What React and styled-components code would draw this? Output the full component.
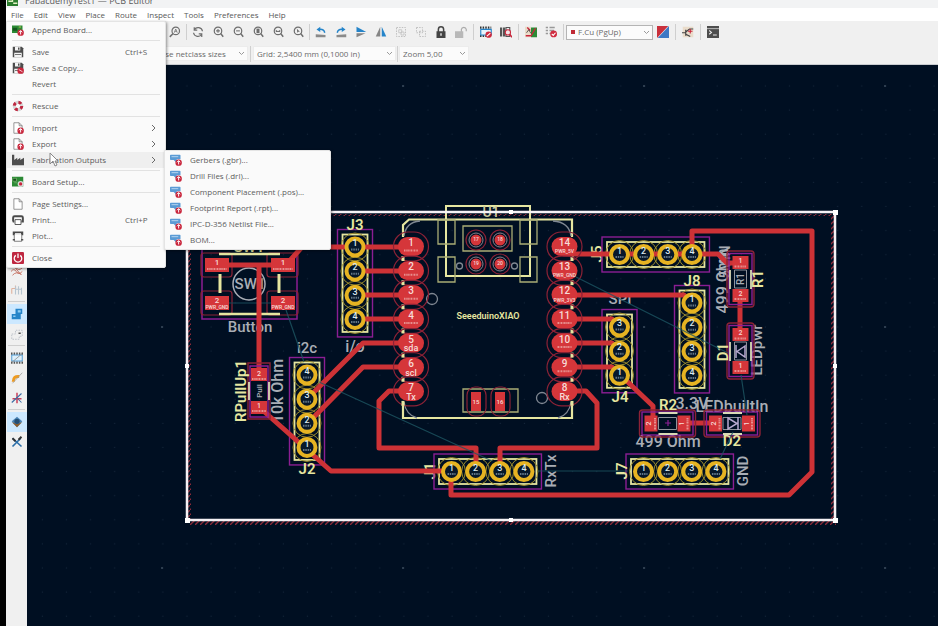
import React from "react";
import styled, { createGlobalStyle } from "styled-components";

const GlobalStyle = createGlobalStyle`
  * { box-sizing: border-box; }
  html, body { margin: 0; background: #000; }
  body, button, select { font-family: "Open Sans", "Noto Sans", sans-serif; font-size: 8px; }
`;

/* ---------- window chrome ---------- */

const Desktop = styled.div`
  min-height: 100vh;
  padding-left: 6px;
  background: #000;
  display: flex;
  overflow: hidden;
`;
const Window = styled.div`
  flex: 1;
  min-width: 0;
  display: flex;
  flex-direction: column;
  background: #f0f0f0;
  color: #5c5c5c;
`;
const TitleBar = styled.header`
  height: 8px;
  display: flex;
  align-items: flex-end;
  gap: 7px;
  padding: 0 1px 2px;
  overflow: hidden;
  background: #f2f3f4;
  line-height: 10px;
  font-size: 9px;
  svg { flex: none; }
`;
const MenuBar = styled.nav`
  position: relative;
  height: 13px;
  display: flex;
  background: #fff;
`;
const MenuTitle = styled.button`
  border: 0;
  padding: 0 5px;
  background: transparent;
  color: #585858;
  line-height: 12px;
`;
const ToolRow = styled.div`
  display: flex;
  align-items: center;
  height: 22px;
  padding-left: ${(p) => p.$indent}px;
  background: #f0f0f0;
  border-bottom: ${(p) => (p.$last ? "1px solid #c9ccd0" : "0")};
`;
const ToolButton = styled.button`
  width: 20px;
  height: 20px;
  flex: none;
  padding: 0;
  border: 0;
  display: grid;
  place-items: center;
  background: ${(p) => (p.$active ? "#cce8ff" : "transparent")};
  opacity: ${(p) => (p.$dim ? 0.4 : 1)};
`;
const Divider = styled.span`
  flex: none;
  width: 1px;
  height: 16px;
  margin: 0 ${(p) => p.$gap ?? 2}px;
  background: #cfcfcf;
`;
const SelectBox = styled.label`
  display: grid;
  align-items: center;
  flex: none;
  width: ${(p) => p.$width}px;
  height: 15px;
  background: #fbfbfb;
  border: 1px solid ${(p) => (p.$outlined ? "#b4b4b4" : "#ececec")};
  > * { grid-area: 1 / 1; }
  > svg { justify-self: end; margin-right: 2px; pointer-events: none; }
`;
const Select = styled.select`
  appearance: none;
  width: 100%;
  border: 0;
  padding: 0 8px 0 ${(p) => p.$inset ?? 3}px;
  background: transparent;
  color: #6a6a6a;
  line-height: 12px;
`;
const Swatch = styled.span`
  width: 4px;
  height: 4px;
  margin-left: 4px;
  background: #c02a35;
`;
const Workspace = styled.div`
  flex: 1;
  display: flex;
  min-height: 0;
`;
const SideBar = styled.aside`
  width: 21px;
  flex: none;
  display: flex;
  flex-direction: column;
  align-items: center;
  padding-top: 195px;
  background: #f0f0f0;
`;
const SideRule = styled.span`
  width: 17px;
  height: 1px;
  margin: 1px 0 2px;
  background: #cfcfcf;
`;
const Canvas = styled.main`
  flex: 1;
  min-width: 0;
  display: flex;
  background: #000f22;
  svg { display: block; width: 100%; height: 100%; }
`;

/* ---------- menus ---------- */

const Popup = styled.div`
  position: absolute;
  z-index: 2;
  left: ${(p) => p.$left}px;
  top: ${(p) => p.$top}px;
  width: ${(p) => p.$width}px;
  padding: ${(p) => p.$pad};
  background: #fafafa;
  border: 1px solid #e4e4e4;
  border-radius: 0 2px 2px 2px;
  box-shadow: 1px 1px 3px rgba(0, 0, 0, 0.4);
`;
const Item = styled.button`
  display: grid;
  grid-template-columns: 13px 1fr 31px;
  align-items: center;
  column-gap: 7px;
  width: 100%;
  height: 16px;
  padding: 0 9px 0 5px;
  border: 0;
  text-align: left;
  background: ${(p) => (p.$open ? "#efefef" : "transparent")};
  color: #5c5c5c;
  line-height: 12px;
  white-space: nowrap;
`;
const SubItem = styled(Item)`
  grid-template-columns: 12px 1fr;
  column-gap: 8px;
`;
const Trailing = styled.span`
  display: flex;
  justify-content: ${(p) => (p.$end ? "flex-end" : "flex-start")};
`;
const Rule = styled.hr`
  height: 1px;
  margin: 2px 5px 3px;
  border: 0;
  background: #e2e2e2;
`;
const Pointer = styled.svg`
  position: absolute;
  z-index: 3;
  left: 43px;
  top: 144px;
  width: 10px;
  height: 15px;
`;

/* ---------- icons (16 x 16 grid) ---------- */

const K = "#6e6e6e";
const lens = (
  <g fill="none" stroke={K} strokeWidth="1.6">
    <circle cx="8" cy="6.5" r="5" />
    <path d="M11.5 10l3.500 4.300" strokeWidth="2" />
  </g>
);
const badge = (
  <g>
    <circle cx="11.5" cy="11.5" r="4.3" fill="#c9263c" />
    <path d="M11.5 9v5M9.3 11l2.2-2.2L13.7 11" stroke="#fff" fill="none" strokeWidth="1.3" />
  </g>
);
const noSign = (
  <g>
    <circle cx="11.5" cy="11.5" r="4.2" fill="#d02a3e" />
    <path d="m9.2 13.5 4.6-4" stroke="#fff" strokeWidth="1.5" />
  </g>
);
const page = <path d="M2.5 1h7l4 4v10h-11zM9.5 1v4h4" fill="#fff" stroke="#777" />;
const floppy = (
  <g>
    <path d="M1 1h12l2 2v12H1z" fill="#4c4c4c" />
    <path d="M4 1h7v5H4zM3 9h10v6H3z" fill="#f4f4f4" />
    <path d="M8 2h2v3H8zM4 11h8v1H4z" fill="#4c4c4c" />
  </g>
);
const ICONS = {
  app: <><path d="M0 0h16v16H0z" fill="#2b7d2d" /><path d="M2 9h6V4M9 12h6" stroke="#e3f0c3" fill="none" strokeWidth="2" /></>,
  append: <><path d="M0 2h14v10H0z" fill="#2c8a35" /><path d="M1 5h6v4H1z" fill="#15551d" /><path d="M9 4h3" stroke="#e8e05a" />{badge}</>,
  save: floppy,
  saveCopy: <>{floppy}<circle cx="11.5" cy="11.5" r="4.3" fill="#c9263c" /><path d="m9 10 5 3" stroke="#fff" /></>,
  rescue: <><circle cx="8" cy="8" r="5" fill="none" stroke="#d6d6d6" strokeWidth="4" /><circle cx="8" cy="8" r="5" fill="none" stroke="#bf2740" strokeWidth="4" strokeDasharray="4 3.85" /></>,
  import: <>{page}{badge}</>,
  page,
  fab: <path d="M0 1h3v7l4-3v3l4-3v3l5-3v10H0z" fill="#4d4d4d" />,
  setup: <><path d="M0 1h15v13H0z" fill="#2c8a35" /><path d="M1 3h5v4H1zM3 9h4" fill="#174f1d" stroke="#77b66e" /><circle cx="11.5" cy="10.5" r="4" fill="#d9d9d9" /><circle cx="11.5" cy="10.5" r="2.2" fill="#c9263c" /></>,
  print: <g fill="none" stroke="#4a4a4a"><path d="M1.500 10V5q0-2 2-2h9q2 0 2 2v5h-2M1 10h2" strokeWidth="2.600" /><path d="M4 7.500h8v6.500H4z" fill="#fff" strokeWidth="1.200" /></g>,
  plot: <><path d="M1 2h14v5H1z" fill="#4a4a4a" /><path d="M4 4h8v3H4z" fill="#ddd" /><path d="M3 6v9h10V6" fill="#fff" stroke="#555" /><path d="M1 13h3M12 13h3" stroke="#555" strokeWidth="2" /></>,
  close: <><rect width="16" height="16" rx="1.5" fill="#bf2740" /><path d="M5 4.5a5 5 0 1 0 6 0M8 2v6" fill="none" stroke="#fff" strokeWidth="1.7" /></>,
  gerber: <><path d="M0 2q0-1 1-1h12q1 0 1 1v5H9v5L5 8H1q-1 0-1-1z" fill="#5b9bd5" /><path d="M2 3.500h9" stroke="#a9cdec" strokeWidth="1.5" />{badge}</>,
  find: <g fill="none" stroke={K} strokeWidth="1.6"><circle cx="9" cy="6.5" r="5" /><path d="M5.500 10 1 14.500" strokeWidth="2" /><path d="m7 9 2-5 2 5M7.5 7h3" strokeWidth="1" /></g>,
  refresh: <path d="M14 7A6 6 0 0 0 3 5M2 9a6 6 0 0 0 11 2M3 1.5V5.5h4M13 14.5v-4H9" fill="none" stroke={K} strokeWidth="1.6" />,
  zoomIn: <>{lens}<path d="M5.500 6.500h5M8 4v5" stroke={K} strokeWidth="1.400" /></>,
  zoomOut: <>{lens}<path d="M5.500 6.500h5" stroke={K} strokeWidth="1.400" /></>,
  zoomPage: <>{lens}<path d="M6 3.500h4v6H6z" fill={K} /></>,
  zoomObj: <>{lens}<path d="M5 8V5l3 2 3-2v3z" fill={K} /></>,
  zoomSel: <>{lens}<path d="m6.500 3.500 4 4-2 .3L7 9z" fill={K} /></>,
  ccw: <><path d="M1 15v-4l13 1v3z" fill="#8a8a8a" /><path d="M13 9Q12 4 6 4.5" fill="none" stroke="#2584c9" strokeWidth="2" /><path d="M7 1v7L2 4.5z" fill="#2584c9" /></>,
  cw: <><path d="M2 15v-3l13-1v4z" fill="#8a8a8a" /><path d="M3 9Q4 4 10 4.5" fill="none" stroke="#2584c9" strokeWidth="2" /><path d="M9 1v7l5-3.5z" fill="#2584c9" /></>,
  flipV: <><path d="M2 1v7h13z" fill="#2584c9" /><path d="M2 15V9.5h12z" fill="#858585" /></>,
  flipH: <><path d="M9 1v13h6z" fill="#2584c9" /><path d="M7 1v13H1z" fill="#858585" /></>,
  group: <><path d="M2 2h12v12H2z" fill="none" stroke="#555" strokeDasharray="2 1.5" /><path d="M5 5h4v4H5zM8 8h4v4H8z" fill="none" stroke="#777" /></>,
  ungroup: <path d="M2 2h8v7H2zM6 7h8v7H6z" fill="none" stroke="#555" strokeDasharray="2 1.5" />,
  lock: <><path d="M4.5 8V4.5a3.5 3.5 0 0 1 7 0V8" fill="none" stroke="#444" strokeWidth="2" /><path d="M2 7h12v9H2z" fill="#444" /><path d="M8 9.5v3.5" stroke="#ddd" strokeWidth="2" /></>,
  unlock: <><path d="M8.5 8V4.5a3.3 3.3 0 0 1 6.5 0V7" fill="none" stroke="#444" strokeWidth="1.5" /><path d="M0 7h11v9H0z" fill="#666" /></>,
  footEd: <><path d="M0 2h15M0 13h9" stroke="#333" strokeWidth="3" strokeDasharray="2 1.5" /><path d="M1 4.5h14V12H1z" fill="#e8f3fb" stroke="#2584c9" strokeWidth="1.5" />{noSign}</>,
  library: <><path d="M0 2h3v12H0zM4 2h3v12H4z" fill="#555" /><path d="M8 2h5v12H8z" fill="none" stroke="#555" strokeWidth="1.5" /><circle cx="10.5" cy="8.5" r="3.5" fill="#f4e6e8" stroke="#c9263c" strokeWidth="1.4" /><path d="m13 11 3 4" stroke="#c9263c" strokeWidth="2" /></>,
  update: <><path d="M0 1h8v14H0z" fill="#eadbc9" /><path d="M8 2h8v13H8z" fill="#2c8a35" /><path d="M1 13h7L14 3M3 2l4 4" stroke="#c9263c" strokeWidth="1.8" fill="none" /><path d="m2 9 3-4 3 5" stroke="#333" fill="none" /></>,
  drc: <><path d="M1 2h3M1 6h3M1 10h3M6 2h7M6 6h6M6 10h2" stroke="#999" strokeWidth="1.8" /><circle cx="11.5" cy="10.5" r="4.5" fill="#d02a3e" /><path d="m9 10.5 2 2 3-3.5" fill="none" stroke="#fff" strokeWidth="1.5" /></>,
  layers: <><path d="M0 0h15L0 16z" fill="#c9303c" /><path d="M16 0v16H1z" fill="#3d78c4" /></>,
  schematic: <><path d="M1 1h14v14H1z" fill="#eadccb" /><path d="M0 9h5M5 5v8M5 8l5-4h5M5 11l6 3" stroke="#444" fill="none" strokeWidth="1.6" /><path d="M8 7h6M11 4v6" stroke="#c9263c" strokeWidth="1.5" /></>,
  console: <><path d="M0 0h16v16H0z" fill="#4d4d4d" /><path d="M0 3.5h16" stroke="#ddd" /><path d="m3 6 3 2.5L3 11M8 12h5" stroke="#eee" fill="none" strokeWidth="1.4" /></>,
  ratsnest: <path d="M0 5q4-5 7 0t8 0M0 10q4-5 7 0t8 0M2 15q5-6 12-1M3 2l10 12" fill="none" stroke="#c46b5b" strokeWidth="1.2" />,
  netcolor: <><path d="M1 6h5V2M1 6v7" fill="none" stroke="#e0b39f" strokeWidth="1.5" /><path d="M6 3v11M10 3v11M6 7h8M14 5v9" fill="none" stroke="#b7c5d0" strokeWidth="1.5" /></>,
  zoneFill: <><path d="M1 8h5V1h9v7h-2v7H1z" fill="#2584c9" /><path d="M9 3h4v3H9zM3 10h3v2H3z" fill="#8ecbf2" /></>,
  zoneLine: <><path d="M1 8h5V3h9v8h-4v4H1z" fill="none" stroke="#aeb4bd" strokeDasharray="2 1.5" /><path d="M10 6h3v2h-3z" fill="#555" /></>,
  padSketch: <><path d="M0 2h16M0 14h16" stroke="#555" strokeWidth="3" strokeDasharray="2 1.5" /><path d="M1 4h14v8H1z" fill="#dff0fb" stroke="#2584c9" /><path d="M1 14 15 2" stroke="#888" /></>,
  viaSketch: <><path d="M3 13Q3 5 11 6" fill="none" stroke="#ef9b20" strokeWidth="4" /><path d="m2 15 13-14" stroke="#999" /></>,
  trackSketch: <><path d="M8 1v14M2 9h12" stroke="#c9405a" strokeWidth="2" /><path d="m1 14 13-12M9 9l5 5" stroke="#3b6ea5" strokeWidth="1.4" /></>,
  contrast: <><path d="M1 7 8 1l7 6-7 8z" fill="#4d86b8" /><path d="m1 8 7 7 7-7-7 3z" fill="#8b5c2c" /><circle cx="8" cy="7" r="3.5" fill="#244e74" /></>,
  tools: <><path d="m2 3 12 11M2 14 13 3" stroke="#2b6ea8" strokeWidth="2.2" /><path d="m10 5 4-4M2 3l4 4" stroke="#333" strokeWidth="2.5" /></>,
};
const Icon = ({ name, size = 12 }) => (
  <svg width={size} height={size} viewBox="0 0 16 16" aria-hidden="true">{ICONS[name]}</svg>
);
const Chevron = () => (
  <svg width="7" height="7" viewBox="0 0 7 7" aria-hidden="true"><path d="m1 2 2.500 2.500L6 2" fill="none" stroke="#9a9a9a" /></svg>
);
const Arrow = () => (
  <svg width="6" height="8" viewBox="0 0 6 8" aria-hidden="true"><path d="m2 1 3 3-3 3" fill="none" stroke="#6a6a6a" /></svg>
);

/* ---------- data ---------- */

const MENUS = ["File", "Edit", "View", "Place", "Route", "Inspect", "Tools", "Preferences", "Help"];
const FILE_MENU = [
  ["append", "Append Board..."], null,
  ["save", "Save", "Ctrl+S"], ["saveCopy", "Save a Copy..."], [null, "Revert"], null,
  ["rescue", "Rescue"], null,
  ["import", "Import", ">"], ["import", "Export", ">"], ["fab", "Fabrication Outputs", ">"], null,
  ["setup", "Board Setup..."], null,
  ["page", "Page Settings..."], ["print", "Print...", "Ctrl+P"], ["plot", "Plot..."], null,
  ["close", "Close"],
];
const FAB_MENU = ["Gerbers (.gbr)...", "Drill Files (.drl)...", "Component Placement (.pos)...", "Footprint Report (.rpt)...", "IPC-D-356 Netlist File...", "BOM..."];
/* a number stands for a divider with that margin */
const TOOLS = ["find", 1, "refresh", "zoomIn", "zoomOut", "zoomPage", "zoomObj", "zoomSel", 1, "ccw", "cw", "flipV", "flipH", "group", "ungroup", "lock", "unlock", 2, "footEd", "library", 2, "update", "drc", 2];
const SIDE = ["ratsnest", "netcolor", null, "zoneFill", "zoneLine", null, "padSketch", "viaSketch", "trackSketch", null, "contrast", "tools"];
const DIM = ["group", "ungroup", "unlock"];

/* ---------- board drawing ---------- */

const SILK = "#e6e6a0";
const COPPER = "#cd3236";
const PAD = "#d5363a";
const PAD_TEXT = "#f7dcd8";
const COURT = "#8b1e93";
const FAB = "#a9adb5";
const MASK = "#8c2236";
const PITCH = 24.15;

const BoardText = styled.text`
  font-family: Roboto, sans-serif;
  font-size: ${(p) => p.$size}px;
  font-weight: ${(p) => (p.$bold ? 600 : 500)};
  fill: ${(p) => p.$color};
  text-anchor: middle;
`;
const Label = ({ x, y, children, vertical, size = 15, color = FAB, bold }) => (
  <BoardText dy="0.36em" $size={size} $color={color} $bold={bold} transform={`translate(${x} ${y})${vertical ? " rotate(-90)" : ""}`}>
    {children}
  </BoardText>
);
const NetMark = ({ x, y, w = 14 }) => (
  <path d={`M${x - w / 2} ${y}h${w}`} stroke="#f0b7b4" strokeWidth="2" strokeDasharray="1.5 .6 .7 .5" opacity=".7" />
);

const HEADERS = [
  { ref: "J3", x: 355, y: 247, pins: [1, 2, 3, 4] },
  { ref: "J2", x: 307, y: 375, pins: [4, 3, 2, 1] },
  { ref: "J1", x: 451.5, y: 471.5, pins: [1, 2, 3, 4], row: true },
  { ref: "J5", x: 619.5, y: 254.5, pins: [1, 2, 3, 4], row: true },
  { ref: "J8", x: 692, y: 303, pins: [1, 2, 3, 4] },
  { ref: "J4", x: 619.5, y: 327, pins: [3, 2, 1] },
  { ref: "J7", x: 643.5, y: 471.5, pins: [1, 2, 3, 4], row: true },
];
const pinAt = (h, i) => [h.x + (h.row ? i * PITCH : 0), h.y + (h.row ? 0 : i * PITCH)];

const HeaderOutline = ({ header }) => {
  const len = (header.pins.length - 1) * PITCH;
  const w = header.row ? len : 0;
  const h = header.row ? 0 : len;
  const { x, y } = header;
  return (
    <g fill="none">
      <rect x={x - 17.5} y={y - 17.5} width={w + 35} height={h + 35} stroke={COURT} strokeWidth="1.4" />
      <rect x={x - 12.5} y={y - 12.5} width={w + 25} height={h + 25} stroke={SILK} strokeWidth="1.8" />
      {header.pins.map((pin, i) => {
        const [cx, cy] = pinAt(header, i);
        return <circle key={pin} cx={cx} cy={cy} r="14" stroke="#9c8c2c" />;
      })}
    </g>
  );
};
const HeaderPins = ({ header }) => header.pins.map((pin, i) => {
  const [cx, cy] = pinAt(header, i);
  return (
    <g key={pin}>
      <circle cx={cx} cy={cy} r="8.5" stroke="#e6b322" strokeWidth="4" fill="#07182b" />
      <path d={`M${cx - 4} ${cy + 2.5}h8`} stroke="#9fb5c4" strokeWidth="2" strokeDasharray="1.5 .8" opacity=".6" />
      <Label x={cx} y={cy - 4} size={9} color="#dbe8ee">{pin}</Label>
    </g>
  );
});

const LEFT_PINS = [["1"], ["2"], ["3"], ["4"], ["5", "sda"], ["6", "scl"], ["7", "Tx"]];
const RIGHT_PINS = [["14", "PWR_5V"], ["13", "PWR_GND"], ["12", "PWR_3V3"], ["11"], ["10"], ["9"], ["8", "Rx"]];

const ModulePads = ({ x, pins, side }) => pins.map(([pin, net], i) => {
  const y = 246.5 + i * PITCH;
  return (
    <g key={pin}>
      <rect x={x - 17.5} y={y - 14.5} width="35" height="29" rx="14.5" fill="none" stroke={MASK} strokeWidth="1.2" />
      <path d={`M${side} ${y + 9.5}v5`} stroke={SILK} strokeWidth="3" />
      <rect x={x - 13} y={y - 9.5} width="26" height="19" rx="9.5" fill={PAD} />
      <Label x={x} y={y - 4} size={10} color={PAD_TEXT}>{pin}</Label>
      {net ? <Label x={x} y={y + 5} size={net.length > 3 ? 5 : 9} color={PAD_TEXT}>{net}</Label> : <NetMark x={x} y={y + 4} />}
    </g>
  );
});

const Chip = ({ x, y, horizontal, top = 2, bottom = 1 }) => (
  <g transform={`translate(${x} ${y})${horizontal ? " rotate(-90)" : ""}`} fill="none">
    <rect x="-13.5" y="-28" width="27" height="56" rx="3" stroke={MASK} strokeWidth="1.4" />
    <rect x="-11.5" y="-25.5" width="23" height="51" stroke={COURT} strokeWidth="1.4" />
    <path d="M-10.500-9v19M10.500-9v19" stroke="#d9d9b5" strokeWidth="1.8" />
    <path d="M-6-9h12v18H-6z" stroke="#8f939b" />
    <rect x="-8" y="-23" width="16" height="13" fill={PAD} />
    <rect x="-8" y="10" width="16" height="13" fill={PAD} />
    <NetMark x={0} y={-12.5} w={12} />
    <NetMark x={0} y={20} w={12} />
    <Label x={0} y={-19} size={7} color={PAD_TEXT}>{top}</Label>
    <Label x={0} y={14} size={7} color={PAD_TEXT}>{bottom}</Label>
  </g>
);

const TRACKS = [
  "M355 247H302L286 265H217M259 265V375", "M355 247H411", "M355 271H411", "M355 295H411", "M355 319H411",
  "M259 407 331 471H451", "M307 399 363 343H411", "M307 424 363 367H411",
  "M411 391H389L379 401V448H476V471", "M564 391H586L597 403V448H500V471",
  "M451 471V495H789L812 472V231H692V254", "M564 254H718L727 263H740",
  "M564 295H684L692 303", "M564 319H612L620 327", "M564 343H612L620 351", "M564 367H612L653 406V421",
  "M684 423H717", "M740 295V335",
];

const Board = () => (
  <svg viewBox="27 65 911 561" preserveAspectRatio="xMinYMin slice" role="img" aria-label="Printed circuit board layout">
    <defs>
      <pattern id="minor" x="175" y="74" width="24.1" height="24.1" patternUnits="userSpaceOnUse"><circle cx="12" cy="12" r=".6" fill="#14253a" /></pattern>
      <pattern id="major" x="42" y="-34" width="241" height="241" patternUnits="userSpaceOnUse"><circle cx="120" cy="120" r="1" fill="#3a4a5c" /></pattern>
      <pattern id="hatch" width="5" height="5" patternUnits="userSpaceOnUse"><path d="M0 5 5 0" stroke="#8e2a38" strokeWidth="1.3" /></pattern>
    </defs>
    <rect x="27" y="65" width="2000" height="2000" fill="url(#minor)" />
    <rect x="27" y="65" width="2000" height="2000" fill="url(#major)" />
    <path d="M189 214H834V216H189zM189 521H836V525H189zM188 214H191V520H188zM831 214H834V520H831z" fill="url(#hatch)" />

    {/* switch outlines */}
    <g fill="none">
      <rect x="202" y="244" width="95" height="75" stroke={COURT} strokeWidth="1.5" />
      {[[217, 265], [283, 265], [217, 303], [283, 303]].map(([x, y]) => (
        <rect key={`${x}-${y}`} x={x - 16} y={y - 12} width="31" height="24" rx="3" stroke={MASK} strokeWidth="1.2" />
      ))}
      <path d="M219 254H280M219 314H280" stroke={SILK} strokeWidth="2.5" />
      <path d="M220 274V293M279 274V293" stroke={SILK} strokeWidth="3" />
      <circle cx="249" cy="284" r="16" stroke={FAB} strokeWidth="1.5" />
      <path d="M217 303H283" stroke="#164856" />
    </g>
    <Label x={249} y={247} size={15} color={SILK} bold>SW1</Label>
    <Label x={250} y={284}>SW1</Label>
    <Label x={250} y={327}>Button</Label>

    {/* fabrication text */}
    <Label x={307} y={348}>i2c</Label>
    <Label x={355} y={346} size={16}>i/o</Label>
    <Label x={277} y={391} size={16} vertical>10k Ohm</Label>
    <Label x={551} y={471} vertical>RxTx</Label>
    <Label x={620} y={299}>SPI</Label>
    <Label x={722} y={281} size={16} vertical>499 Ohm</Label>
    <Label x={725} y={262} vertical>5VIN</Label>
    <Label x={692} y={403} size={16}>3.3V</Label>
    <Label x={732} y={406} size={16}>LEDbuiltIn</Label>
    <Label x={668} y={441} size={16}>499 Ohm</Label>
    <Label x={757} y={350} vertical>LEDpwr</Label>
    <Label x={743} y={471} vertical>GND</Label>

    <Label x={430} y={471} color={SILK} bold vertical>J1</Label>
    <Label x={597} y={254} color={SILK} bold vertical>J5</Label>

    {HEADERS.map((h) => <HeaderOutline key={h.ref} header={h} />)}
    <g fill="none" stroke={COPPER} strokeWidth="5" strokeLinecap="round" strokeLinejoin="round">
      {TRACKS.map((d) => <path key={d} d={d} />)}
    </g>
    {HEADERS.map((h) => <HeaderPins key={h.ref} header={h} />)}

    {/* switch pads */}
    {[[217, 265, 1], [283, 265, 1], [217, 303, 2], [283, 303, 2]].map(([x, y, n]) => (
      <g key={`${x}.${y}`}>
        <rect x={x - 12} y={y - 7} width="24" height="14" fill={PAD} />
        <Label x={x} y={y - 3} size={8} color={PAD_TEXT}>{n}</Label>
        {n === 2 ? <Label x={x} y={y + 4} size={5} color={PAD_TEXT}>PWR_GND</Label> : <NetMark x={x} y={y + 4} w={20} />}
      </g>
    ))}

    {/* microcontroller module */}
    <g fill="none" stroke={SILK}>
      <path d="M403 237V225L409 219.500H572V237M403 404V418H572V404" strokeWidth="2.2" />
      <path d="M446 206H530V276H446z" strokeWidth="2" />
      <path d="M463 226H512V251H463zM438 220H455V244H438zM438 257H455V282H438zM520 220H537V244H520zM520 257H537V282H520zM463 389H518V412H463z" strokeWidth="1.3" stroke="#a9ad76" />
    </g>
    <g fill="none" stroke="#7f8792" strokeWidth="1.3">
      <path d="M404 236Q406 222 420 221M571 236Q569 222 553 221M404 402Q406 415 417 418M571 402Q569 415 558 418" />
      <circle cx="432" cy="299" r="5.5" /><circle cx="542" cy="398" r="5.5" />
      <circle cx="459.5" cy="266" r="3" /><circle cx="514.5" cy="266" r="3" />
    </g>
    {[[476, 240, 17], [500, 240, 18], [476, 264, 19], [500, 264, 20]].map(([x, y, n]) => (
      <g key={n} fill="none">
        <circle cx={x} cy={y} r="10" stroke={MASK} strokeWidth="1.2" />
        <circle cx={x} cy={y} r="7" stroke="#85848e" />
        <circle cx={x} cy={y} r="5.5" fill={PAD} />
        <Label x={x} y={y - 1} size={5} color={PAD_TEXT}>{n}</Label>
      </g>
    ))}
    {[[476, 15], [500, 16]].map(([x, n]) => (
      <g key={n}>
        <rect x={x - 9} y="387" width="19" height="29" rx="8" fill="none" stroke={MASK} strokeWidth="1.2" />
        <rect x={x - 5} y="392" width="10" height="19" fill={PAD} />
        <Label x={x} y={402} size={6} color={PAD_TEXT}>{n}</Label>
      </g>
    ))}
    <ModulePads x={411} pins={LEFT_PINS} side={403} />
    <ModulePads x={564.5} pins={RIGHT_PINS} side={572} />
    <Label x={491} y={212} size={14} color="#c8caa0">U1</Label>
    <Label x={488} y={316} size={9} color={SILK} bold>SeeeduinoXIAO</Label>

    {/* resistors and diodes */}
    <Chip x={740.5} y={279} top={1} bottom={2} />
    <Chip x={740.5} y={351} />
    <Chip x={667.5} y={423.5} horizontal />
    <Chip x={732} y={423.5} horizontal />
    <path d="M728 418 737 423.500 728 429zM738 417V430M745 346 737 351.500 745 357zM736 345V358" fill="none" stroke="#b7a9cf" strokeWidth="1.5" />
    <path d="M668 420V426M665 423H671" stroke={COURT} strokeWidth="1.2" />
    <Label x={740.5} y={279} size={10} vertical>R1</Label>
    <g transform="translate(259 391)">
      <path d="M-11-28H11V28H-11z" fill="none" stroke={MASK} strokeWidth="1.4" />
      <path d="M-9-25H9V26H-9z" fill="none" stroke={COURT} strokeWidth="1.4" />
      <path d="M-10-9V9M10-9V9" stroke="#d9d9b5" strokeWidth="1.8" />
      <path d="M-8-23H8V-10H-8zM-8 10H8V23H-8z" fill={PAD} />
      <NetMark x={0} y={-12} w={14} />
      <NetMark x={0} y={20} w={14} />
    </g>
    <Label x={259} y={373} size={7} color={PAD_TEXT}>2</Label>
    <Label x={259} y={405} size={7} color={PAD_TEXT}>1</Label>
    <Label x={259} y={391} size={8} vertical>Pull</Label>

    {/* silkscreen references */}
    <Label x={355} y={225} color={SILK} bold>J3</Label>
    <Label x={307} y={469} color={SILK} bold>J2</Label>
    <Label x={692} y={281} color={SILK} bold>J8</Label>
    <Label x={620} y={397} color={SILK} bold>J4</Label>
    <Label x={622} y={471} color={SILK} bold vertical>J7</Label>
    <Label x={241} y={391} color={SILK} bold vertical>RPullUp1</Label>
    <Label x={758} y={279} color={SILK} bold vertical>R1</Label>
    <Label x={723} y={352} color={SILK} bold vertical>D1</Label>
    <Label x={668} y={405} color={SILK} bold>R2</Label>
    <Label x={732} y={441} color={SILK} bold>D2</Label>

    <path d="M286 310 304 362M319 382 492 461M576 277 728 353M538 471H628M741 375 747 415M733 432 720 459" fill="none" stroke="#1d5663" strokeWidth="1.2" opacity=".8" />

    {/* board edge with its drag handles */}
    <rect x="187" y="212" width="648" height="308" fill="none" stroke="#f5f2f5" strokeWidth="2.5" />
    <path d="M185 210h4v4h-4zM833 210h5v5h-5zM185 518h5v5h-5zM833 518h5v5h-5zM509 210h4v4h-4zM509 518h4v4h-4zM185 364h4v4h-4zM833 364h4v4h-4z" fill="#fff" />
  </svg>
);

/* ---------- application ---------- */

const FileMenu = () => (
  <Popup $left={0} $top={13} $width={160} $pad="0 0 1px" role="menu" aria-label="File">
    {FILE_MENU.map((entry, i) => {
      if (!entry) return <Rule key={i} />;
      const [icon, text, extra] = entry;
      const nested = extra === ">";
      return (
        <Item key={text} role="menuitem" $open={text === "Fabrication Outputs"}>
          {icon ? <Icon name={icon} /> : <span />}
          <span>{text}</span>
          {extra && <Trailing $end={nested}>{nested ? <Arrow /> : extra}</Trailing>}
        </Item>
      );
    })}
  </Popup>
);

export default function App() {
  return (
    <Desktop>
      <GlobalStyle />
      <Window>
        <TitleBar><Icon name="app" size={11} /><span>FabacdemyTest1 — PCB Editor</span></TitleBar>
        <MenuBar>
          {MENUS.map((m) => <MenuTitle key={m}>{m}</MenuTitle>)}
          <FileMenu />
          <Popup $left={158} $top={142} $width={167} $pad="1px 0" role="menu" aria-label="Fabrication Outputs">
            {FAB_MENU.map((t) => <SubItem key={t} role="menuitem"><Icon name="gerber" /><span>{t}</span></SubItem>)}
          </Popup>
          <Pointer viewBox="0 0 10 15" aria-hidden="true"><path d="M1 1v11l3-3 2 5 2-1-2-4h3z" fill="#fff" stroke="#888" /></Pointer>
        </MenuBar>
        <ToolRow $indent={159}>
          {TOOLS.map((t, i) => typeof t === "string"
            ? <ToolButton key={t} aria-label={t} $dim={DIM.includes(t)}><Icon name={t} size={12} /></ToolButton>
            : <Divider key={i} $gap={t} />)}
          <SelectBox $width={87} $outlined>
            <Swatch />
            <Select aria-label="Active layer" $inset={11}><option>F.Cu (PgUp)</option></Select>
            <Chevron />
          </SelectBox>
          <ToolButton aria-label="layer pair"><Icon name="layers" /></ToolButton>
          <Divider />
          <ToolButton aria-label="schematic"><Icon name="schematic" /></ToolButton>
          <Divider />
          <ToolButton aria-label="console"><Icon name="console" /></ToolButton>
        </ToolRow>
        <ToolRow $indent={122} $last>
          <SelectBox $width={120}><Select aria-label="Track width" $inset={7}><option>Track: use netclass sizes</option></Select><Chevron /></SelectBox>
          <Divider />
          <SelectBox $width={143}><Select aria-label="Grid"><option>Grid: 2,5400 mm (0,1000 in)</option></Select><Chevron /></SelectBox>
          <Divider $gap={1} />
          <SelectBox $width={70}><Select aria-label="Zoom"><option>Zoom 5,00</option></Select><Chevron /></SelectBox>
        </ToolRow>
        <Workspace>
          <SideBar>
            {SIDE.map((t, i) => t
              ? <ToolButton key={t} aria-label={t} $active={t === "zoneFill" || t === "contrast"}><Icon name={t} /></ToolButton>
              : <SideRule key={i} />)}
          </SideBar>
          <Canvas><Board /></Canvas>
        </Workspace>
      </Window>
    </Desktop>
  );
}
